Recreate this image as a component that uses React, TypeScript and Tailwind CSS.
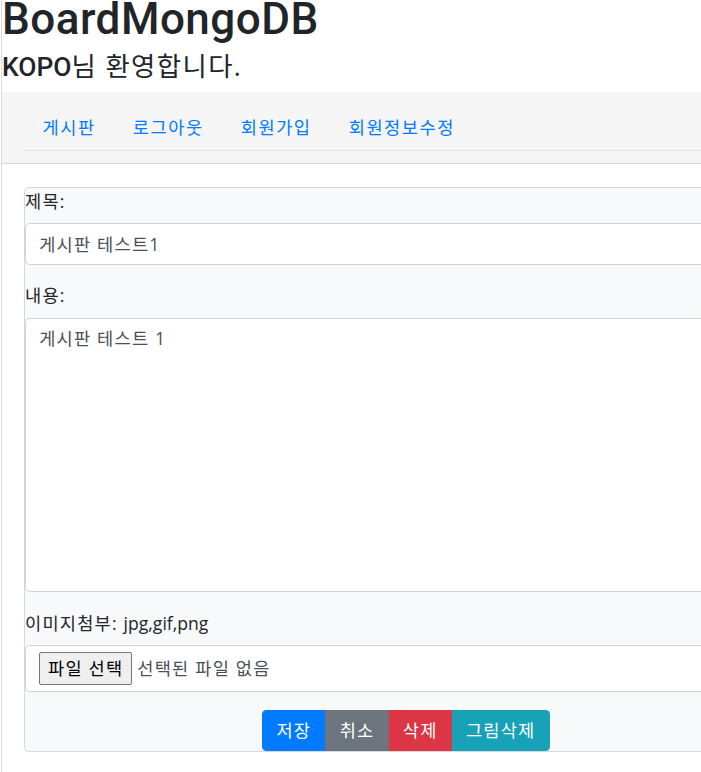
// Board edit page: title, welcome line, nav tabs and the post form card.

const FONT = '"Open Sans", "Noto Sans CJK KR", sans-serif';
const TITLE_FONT = 'Roboto, "Noto Sans CJK KR", sans-serif';

const navItems = ["게시판", "로그아웃", "회원가입", "회원정보수정"];

const buttons = [
  { label: "저장", className: "bg-[#007bff] rounded-l-[4.4px]" },
  { label: "취소", className: "bg-[#6c757d]" },
  { label: "삭제", className: "bg-[#dc3545]" },
  { label: "그림삭제", className: "bg-[#17a2b8] rounded-r-[4.4px]" },
];

export default function App() {
  return (
    <div
      className="w-[701px] h-[772px] overflow-hidden bg-white text-[#212529]"
      style={{ fontFamily: FONT }}
    >
      <div className="w-[812px] min-h-[772px] ml-[1px] border-l border-[#dcdcdc]">
        {/* Header */}
        <h1
          className="mb-[11.8px] text-[44px] leading-[38.8px] font-medium tracking-[0.5px]"
          style={{ fontFamily: TITLE_FONT }}
        >
          BoardMongoDB
        </h1>
        <h4 className="mb-[8.8px] text-[26.4px] leading-[31.7px] font-normal tracking-[1.4px]">
          <span className="font-medium tracking-normal" style={{ fontFamily: TITLE_FONT }}>
            KOPO
          </span>
          님 환영합니다.
        </h4>

        {/* Nav */}
        <nav className="bg-[#f5f5f5] border-b border-[#d9d9d9] pt-[12px] pb-[12px] pl-[22px]">
          <ul className="flex border-b border-[#dee2e6]">
            {navItems.map((item) => (
              <li key={item}>
                <a className="block border border-transparent px-[17.6px] py-[8.8px] text-[17.6px] leading-[26.4px] tracking-[1.5px] text-[#007bff]">
                  {item}
                </a>
              </li>
            ))}
          </ul>
        </nav>

        {/* Form card */}
        <div className="mt-[23px] ml-[22px] w-[764px] bg-[#f8f9fa] border border-[#d6d8db] rounded-[4.4px] text-[17.6px] leading-[26.4px] tracking-[1.2px]">
          <label className="block mb-[8.8px]">제목:</label>
          <div className="h-[41.6px] bg-white border border-[#ced4da] rounded-[4.4px] px-[13.2px] py-[6.6px] text-[#495057]">
            게시판 테스트1
          </div>

          <label className="block mt-[17.6px] mb-[8.8px]">내용:</label>
          <div className="h-[274.6px] bg-white border border-[#ced4da] rounded-[4.4px] px-[13.2px] py-[6.6px] text-[#495057]">
            게시판 테스트 1
          </div>

          <label className="block mt-[17.6px] mb-[8.8px]">
            이미지첨부: <span className="tracking-normal">jpg,gif,png</span>
          </label>
          <div className="flex items-center gap-[5px] h-[47px] bg-white border border-[#ced4da] rounded-[4.4px] px-[13px] text-[#495057]">
            <span className="h-[33px] px-[8px] flex items-center bg-[#efefef] border border-[#767676] rounded-[2px] text-black">
              파일 선택
            </span>
            <span>선택된 파일 없음</span>
          </div>

          <div className="flex justify-center mt-[17.6px]">
            {buttons.map((b) => (
              <button
                key={b.label}
                className={`border border-transparent px-[13.2px] py-[6.6px] text-white text-[17.6px] leading-[26.4px] tracking-[1.2px] ${b.className}`}
              >
                {b.label}
              </button>
            ))}
          </div>
        </div>
      </div>
    </div>
  );
}
